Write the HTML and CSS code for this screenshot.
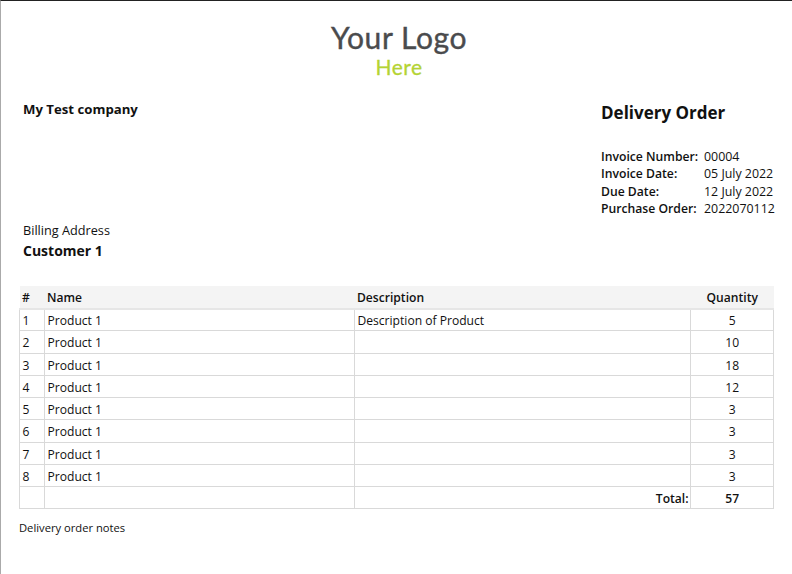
FILE: index.html
```html
<!DOCTYPE html>
<html lang="en">
<head>
<meta charset="utf-8">
<title>Delivery Order</title>
<link rel="stylesheet" href="styles.css">
</head>
<body>
<div class="page">
  <div class="logo">
    <div class="logo-main">Your Logo</div>
    <div class="logo-sub">Here</div>
  </div>
  <div class="top">
    <div class="left">
      <div class="company">My Test company</div>
      <div class="billing">Billing Address</div>
      <div class="customer">Customer 1</div>
    </div>
    <div class="right">
      <div class="title">Delivery Order</div>
      <dl class="meta">
        <dt>Invoice Number:</dt><dd>00004</dd>
        <dt>Invoice Date:</dt><dd>05 July 2022</dd>
        <dt>Due Date:</dt><dd>12 July 2022</dd>
        <dt>Purchase Order:</dt><dd>2022070112</dd>
      </dl>
    </div>
  </div>
  <table class="items">
    <colgroup><col class="c1"><col class="c2"><col class="c3"><col class="c4"></colgroup>
    <thead>
      <tr><th>#</th><th>Name</th><th>Description</th><th class="qty">Quantity</th></tr>
    </thead>
    <tbody>
      <tr><td>1</td><td>Product 1</td><td>Description of Product</td><td class="qty">5</td></tr>
      <tr><td>2</td><td>Product 1</td><td></td><td class="qty">10</td></tr>
      <tr><td>3</td><td>Product 1</td><td></td><td class="qty">18</td></tr>
      <tr><td>4</td><td>Product 1</td><td></td><td class="qty">12</td></tr>
      <tr><td>5</td><td>Product 1</td><td></td><td class="qty">3</td></tr>
      <tr><td>6</td><td>Product 1</td><td></td><td class="qty">3</td></tr>
      <tr><td>7</td><td>Product 1</td><td></td><td class="qty">3</td></tr>
      <tr><td>8</td><td>Product 1</td><td></td><td class="qty">3</td></tr>
      <tr class="total"><td></td><td></td><td class="total-label">Total:</td><td class="qty">57</td></tr>
    </tbody>
  </table>
  <div class="notes">Delivery order notes</div>
</div>
</body>
</html>
```
FILE: styles.css
```css
* { box-sizing: border-box; }
html, body { margin: 0; height: 100%; background: #fff; overflow: hidden; }
body { font-family: "Open Sans", "Noto Sans", sans-serif; color: #111; font-size: 12px; }
.page {
  height: 574px;
  border-top: 1px solid #222;
  border-left: 1px solid #aaa;
  padding: 0 18px;
}
.logo { text-align: center; height: 85px; padding-top: 18px; padding-left: 5px; color: #4a4b4d; font-family: Lato, sans-serif; }
.logo-main { font-size: 30px; line-height: 36px; letter-spacing: 0.6px; -webkit-text-stroke: 0.4px #4a4b4d; }
.logo-sub { font-size: 21px; line-height: 24px; color: #b4d334; letter-spacing: 0.5px; -webkit-text-stroke: 0.3px #b4d334; }
.top { display: flex; justify-content: space-between; height: 200px; }
.left { padding-left: 4px; }
.company { font-size: 13.2px; font-weight: 700; line-height: 18px; margin-top: 14px; }
.billing { font-size: 12.7px; line-height: 17px; margin-top: 104px; }
.customer { font-size: 14px; font-weight: 700; line-height: 20px; margin-top: 2px; }
.right { width: 173px; }
.title { font-size: 17px; font-weight: 700; line-height: 24px; margin-top: 15px; }
.meta { display: grid; grid-template-columns: 103px auto; margin: 23px 0 0; line-height: 17.4px; font-size: 12.2px; }
.meta dt { font-weight: 600; }
.meta dd { margin: 0; font-size: 12.4px; }
.items { border-collapse: collapse; table-layout: fixed; width: 754px; font-size: 12.1px; }
.c1 { width: 25px; } .c2 { width: 310px; } .c3 { width: 336px; } .c4 { width: 83px; }
.items th { background: #f4f4f4; font-weight: 600; text-align: left; height: 22.5px; padding: 1px 2px 0 2.5px; border-bottom: 2px solid #e6e6e6; }
.items td { height: 22.25px; padding: 2px 2px 0 2.5px; border: 1px solid #d9d9d9; }
.items .qty { text-align: center; }
.items .total-label { text-align: right; font-weight: 600; padding-right: 1.5px; }
.total td { font-weight: 600; }
.notes { font-size: 11.2px; line-height: 15px; margin-top: 10.5px; }
```
